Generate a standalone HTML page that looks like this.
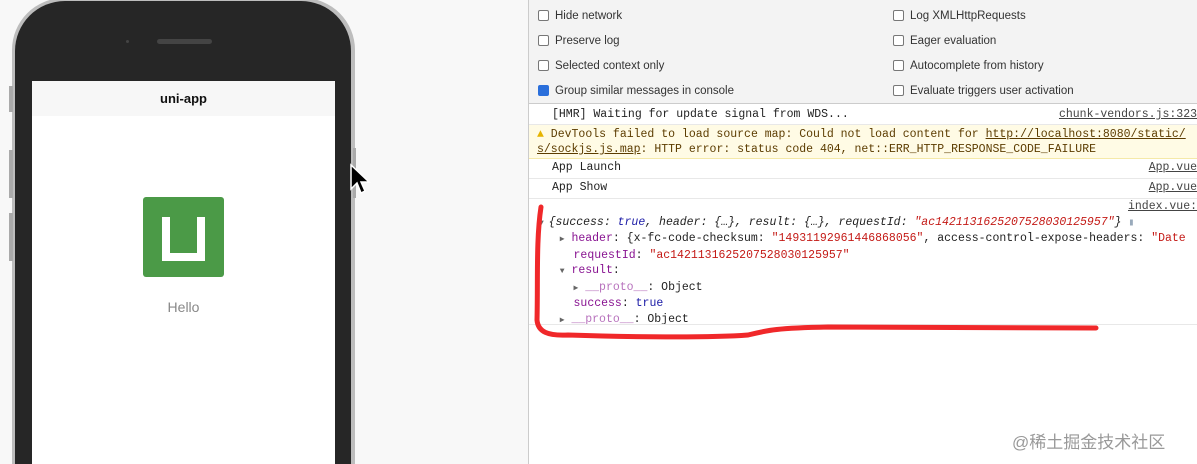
<!DOCTYPE html>
<html style="width:1197px;height:464px;overflow:hidden"><head><meta charset="utf-8"><style>
*{margin:0;padding:0;box-sizing:border-box}
body{width:1197px;height:464px;background:#f8f8f8;position:relative;overflow:hidden;font-family:"Liberation Sans",sans-serif}
.abs{position:absolute}
.phone{left:12px;top:-2px;width:343px;height:466px;background:#bdbdbd;border-radius:52px 52px 0 0}
.body{left:15px;top:1px;width:336px;height:463px;background:#262626;border-radius:50px 50px 0 0}
.screen{left:32px;top:81px;width:303px;height:383px;background:#fff}
.nav{left:32px;top:81px;width:303px;height:35px;background:#f7f7f7;text-align:center;font-weight:bold;font-size:13px;line-height:35px;color:#111}
.dev{left:528px;top:0;width:669px;height:464px;background:#fff;border-left:1px solid #ccc}
.opts{left:529px;top:0;width:668px;height:104px;background:#f3f3f3;border-bottom:1px solid #ccc}
.cb{position:absolute;font-size:11.5px;color:#333;line-height:14px}
.cb i{display:inline-block;width:11px;height:11px;border:1px solid #777;border-radius:2px;background:#fff;vertical-align:-2px;margin-right:6px}
.cb i.on{background:#2a6fdb;border-color:#2a6fdb}
.row{position:absolute;left:529px;width:668px;font-family:"Liberation Mono",monospace;font-size:11.5px;color:#222;border-bottom:1px solid #e8e8e8;white-space:nowrap;overflow:hidden}
.r{position:absolute;right:0;text-decoration:underline;color:#444}
.s{color:#c41a16}.k{color:#881391}.b{color:#1a1aa6}
.t{font-size:8px;color:#666}
</style></head><body>
<div class="abs phone"></div>
<div class="abs body"></div>
<div class="abs" style="left:157px;top:39px;width:55px;height:5px;background:#444;border-radius:3px"></div>
<div class="abs" style="left:126px;top:40px;width:3px;height:3px;background:#444;border-radius:50%"></div>
<div class="abs" style="left:9px;top:86px;width:4px;height:26px;background:#aaa"></div>
<div class="abs" style="left:9px;top:150px;width:4px;height:48px;background:#aaa"></div>
<div class="abs" style="left:9px;top:213px;width:4px;height:48px;background:#aaa"></div>
<div class="abs" style="left:353px;top:148px;width:3px;height:50px;background:#aaa"></div>
<div class="abs screen"></div>
<div class="abs nav">uni-app</div>
<div class="abs" style="left:143px;top:197px;width:81px;height:80px;background:#4b9a47;border-radius:3px"></div>
<div class="abs" style="left:162px;top:217px;width:43px;height:44px;border:8px solid #fff;border-top:none"></div>
<div class="abs" style="left:32px;top:299px;width:303px;text-align:center;color:#888;font-size:14px">Hello</div>
<svg class="abs" style="left:349px;top:163px" width="22" height="34" viewBox="0 0 22 34"><path d="M2 2 L2 26 L8 20 L12 30 L16 28 L12 19 L20 19 Z" fill="#000" stroke="#fff" stroke-width="1.5"/></svg>

<div class="abs dev"></div>
<div class="abs opts">
<div class="cb" style="left:9px;top:9px"><i></i>Hide network</div>
<div class="cb" style="left:9px;top:34px"><i></i>Preserve log</div>
<div class="cb" style="left:9px;top:59px"><i></i>Selected context only</div>
<div class="cb" style="left:9px;top:84px"><i class="on"></i>Group similar messages in console</div>
<div class="cb" style="left:364px;top:9px"><i></i>Log XMLHttpRequests</div>
<div class="cb" style="left:364px;top:34px"><i></i>Eager evaluation</div>
<div class="cb" style="left:364px;top:59px"><i></i>Autocomplete from history</div>
<div class="cb" style="left:364px;top:84px"><i></i>Evaluate triggers user activation</div>
</div>
<div class="row" style="top:105px;height:20px;padding:3px 0 0 23px">[HMR] Waiting for update signal from WDS...<span class="r" style="top:3px">chunk-vendors.js:323</span></div>
<div class="row" style="top:125px;height:34px;background:#fffbe5;border-color:#f5e9a8;padding:2px 0 0 8px;line-height:15px;color:#5c3c00"><span style="color:#e6b400">▲</span> DevTools failed to load source map: Could not load content for <u>http://localhost:8080/static/</u><br><u>s/sockjs.js.map</u>: HTTP error: status code 404, net::ERR_HTTP_RESPONSE_CODE_FAILURE</div>
<div class="row" style="top:159px;height:20px;padding:2px 0 0 23px">App Launch<span class="r" style="top:2px">App.vue</span></div>
<div class="row" style="top:179px;height:20px;padding:2px 0 0 23px">App Show<span class="r" style="top:2px">App.vue</span></div>
<div class="row" style="top:199px;height:126px;padding:0 0 0 10px;line-height:15.5px">
<span class="r" style="top:0">index.vue:</span><br>
<span class="t">▼ </span><i>{success: <span class="b">true</span>, header: {…}, result: {…}, requestId: <span class="s">"ac1421131625207528030125957"</span>}</i> <span style="color:#9ab;font-size:10px">▮</span><br>
&nbsp;&nbsp;&nbsp;<span class="t">▶</span> <span class="k">header</span>: {x-fc-code-checksum: <span class="s">"14931192961446868056"</span>, access-control-expose-headers: <span class="s">"Date</span><br>
&nbsp;&nbsp;&nbsp;&nbsp;&nbsp;<span class="k">requestId</span>: <span class="s">"ac1421131625207528030125957"</span><br>
&nbsp;&nbsp;&nbsp;<span class="t">▼</span> <span class="k">result</span>:<br>
&nbsp;&nbsp;&nbsp;&nbsp;&nbsp;<span class="t">▶</span> <span class="k" style="opacity:.6">__proto__</span>: Object<br>
&nbsp;&nbsp;&nbsp;&nbsp;&nbsp;<span class="k">success</span>: <span class="b">true</span><br>
&nbsp;&nbsp;&nbsp;<span class="t">▶</span> <span class="k" style="opacity:.6">__proto__</span>: Object
</div>
<svg class="abs" style="left:528px;top:200px" width="580" height="145" viewBox="0 0 580 145"><path d="M13 7 C8 40 10 80 9 120 C10 132 20 136 40 135 C100 137 180 138 220 135 C240 130 250 128 300 127 L568 128" fill="none" stroke="#f0282a" stroke-width="5" stroke-linecap="round"/></svg>
<div class="abs" style="left:1012px;top:428px;font-size:17px;color:#999;font-family:'Liberation Sans','Noto Sans CJK SC',sans-serif">@稀土掘金技术社区</div>
</body></html>
